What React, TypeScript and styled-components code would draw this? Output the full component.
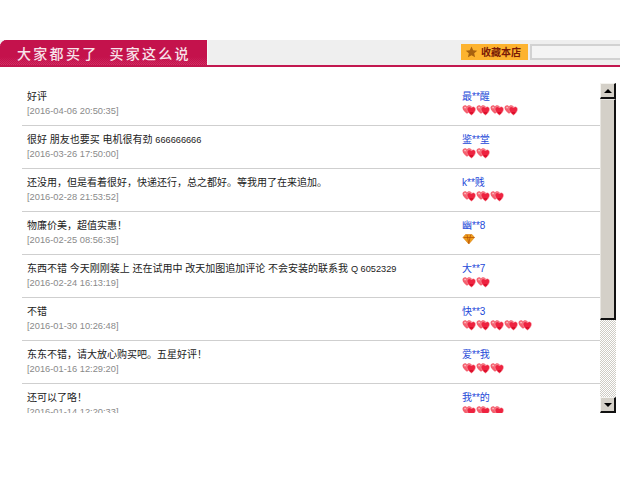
import React from 'react';
import styled, { createGlobalStyle } from 'styled-components';

const GlobalStyle = createGlobalStyle`
  html, body { margin: 0; padding: 0; background: #fff; }
  body { font-family: "Liberation Sans", "Noto Sans CJK SC", sans-serif; }
`;

const Page = styled.div`
  width: 620px;
  height: 479px;
  padding-top: 40px;
  box-sizing: border-box;
  overflow: hidden;
`;

/* top band */
const Header = styled.header`
  display: flex;
  align-items: stretch;
  height: 27px;
  box-sizing: border-box;
  background: #efefef;
  border-bottom: 2px solid #c2174f;
`;

const Tab = styled.div`
  width: 208px;
  box-sizing: border-box;
  padding: 3px 0 0 17px;
  color: #f7e3ea;
  font-family: "Noto Sans CJK SC", sans-serif;
  font-size: 14px;
  font-weight: 500;
  line-height: 21px;
  letter-spacing: 2.3px;
  white-space: pre;
  border-top-left-radius: 7px;
  border-right: 1px solid #f8f8f8;
  background-color: #c4124c;
  background-image:
    linear-gradient(to bottom, #c4124c 0, #c4124c 17px, rgba(196, 18, 76, 0.45) 25px),
    repeating-conic-gradient(#e0517f 0 25%, #c4124c 0 50%);
  background-size: auto, 2px 2px;
`;

const HeaderTools = styled.div`
  display: flex;
  align-items: flex-start;
  margin-left: auto;
  padding-top: 4px;
  gap: 2px;
`;

const FavButton = styled.button`
  display: flex;
  align-items: center;
  gap: 3px;
  width: 67px;
  height: 16px;
  padding: 0 0 0 4px;
  box-sizing: border-box;
  border: 0;
  background: #fdb32f;
  color: #7a1a06;
  font-family: "Noto Sans CJK SC", sans-serif;
  font-size: 10px;
  font-weight: 700;
  line-height: 16px;
  white-space: nowrap;
`;

const SearchBox = styled.div`
  width: 90px;
  height: 16px;
  box-sizing: border-box;
  border: 2px solid #d2d2d2;
  border-right: 0;
  background: #f4f4f4;
`;

/* list with its old style scrollbar */
const Body = styled.main`
  display: flex;
  height: 330px;
  margin-top: 16px;
  padding-left: 22px;
`;

const List = styled.div`
  width: 578px;
  overflow: hidden;
`;

const Row = styled.div`
  display: flex;
  height: 43px;
  box-sizing: border-box;
  border-bottom: 1px solid #cfcfcf;
`;

const Comment = styled.div`
  width: 440px;
  padding: 7px 0 0 5px;
  box-sizing: border-box;
`;

const CommentText = styled.div`
  height: 14px;
  font-size: 10px;
  line-height: 13px;
  color: #222;
  white-space: nowrap;
`;

const Latin = styled.span`
  font-size: 9.2px;
`;

const CommentDate = styled.div`
  font-size: 9.3px;
  line-height: 14px;
  color: #8a8a8a;
  white-space: nowrap;
`;

const Buyer = styled.div`
  padding-top: 7px;
`;

const BuyerName = styled.div`
  height: 14px;
  font-size: 10px;
  line-height: 13px;
  color: #2348d8;
  white-space: nowrap;
`;

const Badges = styled.div`
  display: flex;
  height: 12px;
`;

const ScrollBar = styled.div`
  display: flex;
  flex-direction: column;
  width: 16px;
`;

const ArrowButton = styled.div`
  display: flex;
  align-items: center;
  justify-content: center;
  flex: none;
  height: 16px;
  box-sizing: border-box;
  background: #d4d0c8;
  border-style: solid;
  border-width: 1px 2px 2px 1px;
  border-color: #f4f3ef #111 #111 #f4f3ef;
`;

const Arrow = styled.span<{ $down?: boolean }>`
  width: 0;
  height: 0;
  border-left: 4px solid transparent;
  border-right: 4px solid transparent;
  ${({ $down }) => ($down ? 'border-top: 4px solid #000;' : 'border-bottom: 4px solid #000;')}
`;

const Thumb = styled.div`
  flex: none;
  height: 221px;
  box-sizing: border-box;
  background: #d4d0c8;
  border-style: solid;
  border-width: 1px 2px 2px 1px;
  border-color: #e8e6e1 #111 #111 #e8e6e1;
`;

const Track = styled.div`
  flex: 1;
  background: repeating-conic-gradient(#cfccc4 0 25%, #fff 0 50%) 0 0 / 2px 2px;
`;

const Heart = () => (
  <svg width="14" height="12" viewBox="0 0 14 12">
    <path
      d="M0.500 3.800C0.500 1.200 3.800 0.200 5 2.400c1.300-2.200 5-1.200 5 1.400 0 2.400-3 4.300-5 6-2-1.700-4.500-3.600-4.500-6Z"
      fill="#f4606f"
    />
    <path
      d="M5 5.200C5 2.700 8.200 1.700 9.500 3.900c1.200-2.200 4-1.200 4 1.300 0 2.400-2 4.300-4 6-2.100-1.700-4.500-3.600-4.500-6Z"
      fill="#ee2340"
      stroke="#f9b6bb"
      strokeWidth="0.5"
    />
    <path d="M2.200 2.800h2v1.500h-2z" fill="#fbb7bb" />
    <path d="M8 8h3v1.800H8z" fill="#d90f2a" />
  </svg>
);

const Diamond = () => (
  <svg width="14" height="12" viewBox="0 0 14 12">
    <path d="M3.500 1.500h6.500l2.500 3-5.700 6.500L1 4.500Z" fill="#f0a01c" stroke="#d97a10" strokeWidth="0.6" />
    <path d="M1.500 4.500h11M5 1.800 6.800 10.500 8.600 1.800" fill="none" stroke="#b8560a" strokeWidth="0.8" />
  </svg>
);

type Review = { text: React.ReactNode; date: string; name: string; hearts: number; diamonds?: number };

const reviews: Review[] = [
  { text: '好评', date: '[2016-04-06 20:50:35]', name: '最**醒', hearts: 4 },
  { text: <>很好 朋友也要买 电机很有劲 <Latin>666666666</Latin></>, date: '[2016-03-26 17:50:00]', name: '鉴**堂', hearts: 2 },
  { text: '还没用，但是看着很好，快递还行，总之都好。等我用了在来追加。', date: '[2016-02-28 21:53:52]', name: 'k**贱', hearts: 3 },
  { text: '物廉价美，超值实惠！', date: '[2016-02-25 08:56:35]', name: '幽**8', hearts: 0, diamonds: 1 },
  { text: <>东西不错 今天刚刚装上 还在试用中 改天加图追加评论 不会安装的联系我 <Latin>Q 6052329</Latin></>, date: '[2016-02-24 16:13:19]', name: '大**7', hearts: 2 },
  { text: '不错', date: '[2016-01-30 10:26:48]', name: '快**3', hearts: 5 },
  { text: '东东不错，请大放心购买吧。五星好评！', date: '[2016-01-16 12:29:20]', name: '爱**我', hearts: 3 },
  { text: '还可以了咯！', date: '[2016-01-14 12:20:33]', name: '我**的', hearts: 3 },
];

export default function App() {
  return (
    <Page>
      <GlobalStyle />
      <Header>
        <Tab>{'大家都买了  买家这么说'}</Tab>
        <HeaderTools>
          <FavButton>
            <svg width="13" height="12" viewBox="0 0 24 24">
              <path d="M12 1l3.400 7.400 8 .9-6 5.400 1.700 8L12 18.700 4.900 22.700l1.700-8-6-5.400 8-.9Z" fill="#a8620f" />
            </svg>
            收藏本店
          </FavButton>
          <SearchBox />
        </HeaderTools>
      </Header>
      <Body>
        <List>
          {reviews.map((r) => (
            <Row key={r.date}>
              <Comment>
                <CommentText>{r.text}</CommentText>
                <CommentDate>{r.date}</CommentDate>
              </Comment>
              <Buyer>
                <BuyerName>{r.name}</BuyerName>
                <Badges>
                  {Array.from({ length: r.hearts }, (_, i) => <Heart key={i} />)}
                  {Array.from({ length: r.diamonds ?? 0 }, (_, i) => <Diamond key={i} />)}
                </Badges>
              </Buyer>
            </Row>
          ))}
        </List>
        <ScrollBar>
          <ArrowButton><Arrow /></ArrowButton>
          <Thumb />
          <Track />
          <ArrowButton><Arrow $down /></ArrowButton>
        </ScrollBar>
      </Body>
    </Page>
  );
}
